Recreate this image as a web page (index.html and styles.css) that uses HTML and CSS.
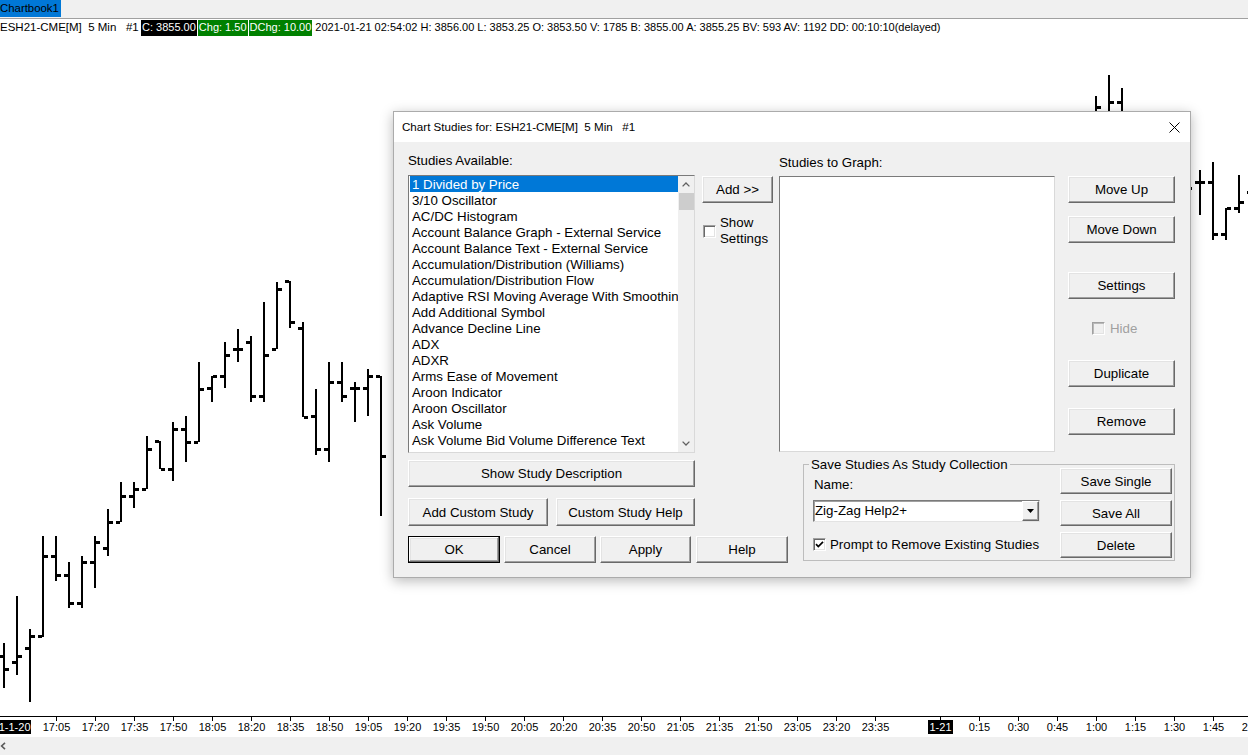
FILE: index.html
```html
<!DOCTYPE html>
<html lang="en">
<head>
<meta charset="utf-8">
<title>Chartbook1</title>
<link rel="stylesheet" href="styles.css">
</head>
<body>
<div class="app">
  <div class="tabbar"><div class="tab">Chartbook1</div></div>
  <div class="info"><span class="sym">ESH21-CME[M]  5 Min   #1</span><span class="box black">C: 3855.00</span><span class="box green">Chg: 1.50</span><span class="box green">DChg: 10.00</span><span class="rest">2021-01-21 02:54:02 H: 3856.00 L: 3853.25 O: 3853.50 V: 1785 B: 3855.00 A: 3855.25 BV: 593 AV: 1192 DD: 00:10:10(delayed)</span></div>

  <div class="chart">
    <svg class="chart-svg" width="1248" height="701" viewBox="0 36 1248 701">
      <g class="bars">
        <rect x="3" y="643" width="2" height="45"/><rect x="-1" y="655" width="4" height="3"/><rect x="5" y="668" width="4" height="3"/>
        <rect x="16" y="596" width="2" height="79"/><rect x="12" y="661" width="4" height="3"/><rect x="18" y="655" width="4" height="3"/>
        <rect x="29" y="629" width="2" height="73"/><rect x="25" y="647" width="4" height="3"/><rect x="31" y="635" width="4" height="3"/>
        <rect x="42" y="536" width="2" height="101"/><rect x="38" y="635" width="4" height="3"/><rect x="44" y="555" width="4" height="3"/>
        <rect x="55" y="536" width="2" height="45"/><rect x="51" y="555" width="4" height="3"/><rect x="57" y="574" width="4" height="3"/>
        <rect x="68" y="562" width="2" height="46"/><rect x="64" y="574" width="4" height="3"/><rect x="70" y="602" width="4" height="3"/>
        <rect x="81" y="556" width="2" height="52"/><rect x="77" y="602" width="4" height="3"/><rect x="83" y="561" width="4" height="3"/>
        <rect x="94" y="536" width="2" height="52"/><rect x="90" y="561" width="4" height="3"/><rect x="96" y="541" width="4" height="3"/>
        <rect x="107" y="509" width="2" height="47"/><rect x="103" y="547" width="4" height="3"/><rect x="109" y="521" width="4" height="3"/>
        <rect x="120" y="482" width="2" height="40"/><rect x="116" y="521" width="4" height="3"/><rect x="122" y="495" width="4" height="3"/>
        <rect x="133" y="482" width="2" height="26"/><rect x="129" y="495" width="4" height="3"/><rect x="135" y="488" width="4" height="3"/>
        <rect x="146" y="436" width="2" height="53"/><rect x="142" y="488" width="4" height="3"/><rect x="148" y="448" width="4" height="3"/>
        <rect x="159" y="441" width="2" height="28"/><rect x="155" y="440" width="4" height="3"/><rect x="161" y="468" width="4" height="3"/>
        <rect x="172" y="422" width="2" height="59"/><rect x="168" y="468" width="4" height="3"/><rect x="174" y="428" width="4" height="3"/>
        <rect x="185" y="416" width="2" height="46"/><rect x="181" y="428" width="4" height="3"/><rect x="187" y="441" width="4" height="3"/>
        <rect x="198" y="362" width="2" height="80"/><rect x="194" y="441" width="4" height="3"/><rect x="200" y="388" width="4" height="3"/>
        <rect x="211" y="376" width="2" height="26"/><rect x="207" y="387" width="4" height="3"/><rect x="213" y="375" width="4" height="3"/>
        <rect x="224" y="342" width="2" height="46"/><rect x="220" y="375" width="4" height="3"/><rect x="226" y="354" width="4" height="3"/>
        <rect x="237" y="329" width="2" height="33"/><rect x="233" y="348" width="4" height="3"/><rect x="239" y="348" width="4" height="3"/>
        <rect x="250" y="336" width="2" height="66"/><rect x="246" y="341" width="4" height="3"/><rect x="252" y="395" width="4" height="3"/>
        <rect x="263" y="302" width="2" height="100"/><rect x="259" y="395" width="4" height="3"/><rect x="265" y="354" width="4" height="3"/>
        <rect x="276" y="282" width="2" height="67"/><rect x="272" y="348" width="4" height="3"/><rect x="278" y="288" width="4" height="3"/>
        <rect x="289" y="281" width="2" height="47"/><rect x="285" y="280" width="4" height="3"/><rect x="291" y="321" width="4" height="3"/>
        <rect x="302" y="322" width="2" height="95"/><rect x="298" y="327" width="4" height="3"/><rect x="304" y="416" width="4" height="3"/>
        <rect x="315" y="389" width="2" height="66"/><rect x="311" y="415" width="4" height="3"/><rect x="317" y="448" width="4" height="3"/>
        <rect x="328" y="362" width="2" height="100"/><rect x="324" y="448" width="4" height="3"/><rect x="330" y="381" width="4" height="3"/>
        <rect x="341" y="362" width="2" height="40"/><rect x="337" y="381" width="4" height="3"/><rect x="343" y="395" width="4" height="3"/>
        <rect x="354" y="382" width="2" height="40"/><rect x="350" y="387" width="4" height="3"/><rect x="356" y="387" width="4" height="3"/>
        <rect x="367" y="369" width="2" height="47"/><rect x="363" y="387" width="4" height="3"/><rect x="369" y="375" width="4" height="3"/>
        <rect x="380" y="376" width="2" height="140"/><rect x="376" y="375" width="4" height="3"/><rect x="382" y="455" width="4" height="3"/>

        <rect x="1095" y="96" width="2" height="24"/><rect x="1097" y="106" width="4" height="3"/>
        <rect x="1108" y="75" width="2" height="45"/><rect x="1110" y="101" width="4" height="3"/>
        <rect x="1121" y="88" width="2" height="32"/><rect x="1117" y="101" width="4" height="3"/>

        <rect x="1186" y="170" width="2" height="30"/><rect x="1188" y="187" width="4" height="3"/>
        <rect x="1199" y="170" width="2" height="45"/><rect x="1195" y="181" width="4" height="3"/><rect x="1201" y="181" width="4" height="3"/>
        <rect x="1212" y="162" width="2" height="78"/><rect x="1208" y="181" width="4" height="3"/><rect x="1214" y="233" width="4" height="3"/>
        <rect x="1225" y="208" width="2" height="32"/><rect x="1221" y="233" width="4" height="3"/><rect x="1227" y="207" width="4" height="3"/>
        <rect x="1238" y="175" width="2" height="38"/><rect x="1234" y="207" width="4" height="3"/><rect x="1240" y="201" width="4" height="3"/>
        <rect x="1251" y="180" width="2" height="30"/><rect x="1247" y="191" width="4" height="3"/>
      </g>

      <g class="axis">
        <rect x="0" y="716" width="1248" height="1"/>
        <rect x="56" y="717" width="1" height="4"/><rect x="95" y="717" width="1" height="4"/><rect x="134" y="717" width="1" height="4"/>
        <rect x="173" y="717" width="1" height="4"/><rect x="212" y="717" width="1" height="4"/><rect x="251" y="717" width="1" height="4"/>
        <rect x="290" y="717" width="1" height="4"/><rect x="329" y="717" width="1" height="4"/><rect x="368" y="717" width="1" height="4"/>
        <rect x="407" y="717" width="1" height="4"/><rect x="446" y="717" width="1" height="4"/><rect x="485" y="717" width="1" height="4"/>
        <rect x="524" y="717" width="1" height="4"/><rect x="563" y="717" width="1" height="4"/><rect x="602" y="717" width="1" height="4"/>
        <rect x="641" y="717" width="1" height="4"/><rect x="680" y="717" width="1" height="4"/><rect x="719" y="717" width="1" height="4"/>
        <rect x="758" y="717" width="1" height="4"/><rect x="797" y="717" width="1" height="4"/><rect x="836" y="717" width="1" height="4"/>
        <rect x="875" y="717" width="1" height="4"/><rect x="940" y="717" width="1" height="4"/><rect x="979" y="717" width="1" height="4"/>
        <rect x="1018" y="717" width="1" height="4"/><rect x="1057" y="717" width="1" height="4"/><rect x="1096" y="717" width="1" height="4"/>
        <rect x="1135" y="717" width="1" height="4"/><rect x="1174" y="717" width="1" height="4"/><rect x="1213" y="717" width="1" height="4"/>
        <rect x="0" y="720" width="31" height="14"/>
        <rect x="928" y="720" width="25" height="14"/>
      </g>
      <g class="axis-labels">
        <text class="date first" x="30.5" y="731">21-1-20</text>
        <text x="56.5" y="731">17:05</text>
        <text x="95.5" y="731">17:20</text>
        <text x="134.5" y="731">17:35</text>
        <text x="173.5" y="731">17:50</text>
        <text x="212.5" y="731">18:05</text>
        <text x="251.5" y="731">18:20</text>
        <text x="290.5" y="731">18:35</text>
        <text x="329.5" y="731">18:50</text>
        <text x="368.5" y="731">19:05</text>
        <text x="407.5" y="731">19:20</text>
        <text x="446.5" y="731">19:35</text>
        <text x="485.5" y="731">19:50</text>
        <text x="524.5" y="731">20:05</text>
        <text x="563.5" y="731">20:20</text>
        <text x="602.5" y="731">20:35</text>
        <text x="641.5" y="731">20:50</text>
        <text x="680.5" y="731">21:05</text>
        <text x="719.5" y="731">21:35</text>
        <text x="758.5" y="731">21:50</text>
        <text x="797.5" y="731">23:05</text>
        <text x="836.5" y="731">23:20</text>
        <text x="875.5" y="731">23:35</text>
        <text class="date" x="940.5" y="731">1-21</text>
        <text x="979.5" y="731">0:15</text>
        <text x="1018.5" y="731">0:30</text>
        <text x="1057.5" y="731">0:45</text>
        <text x="1096.5" y="731">1:00</text>
        <text x="1135.5" y="731">1:15</text>
        <text x="1174.5" y="731">1:30</text>
        <text x="1213.5" y="731">1:45</text>
        <text x="1252.5" y="731">2:00</text>
      </g>
    </svg>
  </div>

  <div class="hscroll">
    <svg class="scroll-left" width="8" height="8" viewBox="0 0 8 8"><path d="M5 0.8L1.6 4L5 7.2"/></svg>
  </div>

  <div class="dialog">
    <div class="titlebar">
      <span class="title">Chart Studies for: ESH21-CME[M]  5 Min   #1</span>
      <svg class="close" width="11" height="11" viewBox="0 0 11 11"><path d="M0.5 0.5L10.5 10.5M10.5 0.5L0.5 10.5"/></svg>
    </div>
    <div class="dlg-body">
      <div class="top">
        <div class="col-avail">
          <div class="label">Studies Available:</div>
          <div class="listbox avail">
            <ul class="items">
              <li class="sel">1 Divided by Price</li>
              <li>3/10 Oscillator</li>
              <li>AC/DC Histogram</li>
              <li>Account Balance Graph - External Service</li>
              <li>Account Balance Text - External Service</li>
              <li>Accumulation/Distribution (Williams)</li>
              <li>Accumulation/Distribution Flow</li>
              <li>Adaptive RSI Moving Average With Smoothing</li>
              <li>Add Additional Symbol</li>
              <li>Advance Decline Line</li>
              <li>ADX</li>
              <li>ADXR</li>
              <li>Arms Ease of Movement</li>
              <li>Aroon Indicator</li>
              <li>Aroon Oscillator</li>
              <li>Ask Volume</li>
              <li>Ask Volume Bid Volume Difference Text</li>
              <li>Ask/Bid Volume Difference Bars</li>
            </ul>
            <div class="vscroll">
              <span class="sb-arrow"><svg width="8" height="5" viewBox="0 0 8 5"><path d="M0.6 4.4L4 1L7.4 4.4"/></svg></span>
              <span class="sb-thumb"></span>
              <span class="sb-track"></span>
              <span class="sb-arrow"><svg width="8" height="5" viewBox="0 0 8 5"><path d="M0.6 0.6L4 4L7.4 0.6"/></svg></span>
            </div>
          </div>
        </div>

        <div class="col-add">
          <button class="btn add">Add &gt;&gt;</button>
          <div class="check show-settings"><span class="cb"></span><span class="check-label">Show<br>Settings</span></div>
        </div>

        <div class="col-graph">
          <div class="label">Studies to Graph:</div>
          <div class="listbox graph"></div>
        </div>

        <div class="col-actions">
          <button class="btn act move-up">Move Up</button>
          <button class="btn act move-down">Move Down</button>
          <button class="btn act settings">Settings</button>
          <div class="check hide"><span class="cb disabled"></span><span class="check-label">Hide</span></div>
          <button class="btn act duplicate">Duplicate</button>
          <button class="btn act remove">Remove</button>
        </div>
      </div>

      <div class="bottom">
        <div class="left-actions">
          <button class="btn describe">Show Study Description</button>
          <div class="row custom-row">
            <button class="btn custom-add">Add Custom Study</button>
            <button class="btn custom-help">Custom Study Help</button>
          </div>
          <div class="row main-row">
            <button class="btn ok">OK</button>
            <button class="btn cancel">Cancel</button>
            <button class="btn apply">Apply</button>
            <button class="btn help">Help</button>
          </div>
        </div>

        <fieldset class="collection">
          <legend>Save Studies As Study Collection</legend>
          <div class="coll-inner">
            <div class="coll-left">
              <div class="name-label">Name:</div>
              <div class="combo">
                <span class="combo-text">Zig-Zag Help2+</span>
                <span class="combo-btn"><svg width="7" height="4" viewBox="0 0 7 4"><path d="M0 0H7L3.5 4Z"/></svg></span>
              </div>
              <div class="check prompt"><span class="cb checked"><svg width="11" height="11" viewBox="0 0 11 11"><path d="M2 5.2L4.3 7.6L9 2.8"/></svg></span><span class="check-label">Prompt to Remove Existing Studies</span></div>
            </div>
            <div class="coll-right">
              <button class="btn save">Save Single</button>
              <button class="btn save">Save All</button>
              <button class="btn save">Delete</button>
            </div>
          </div>
        </fieldset>
      </div>
    </div>
  </div>
</div>
</body>
</html>
```

FILE: styles.css
```css
* { box-sizing: border-box; }

html, body {
  margin: 0;
  padding: 0;
}

body {
  width: 1248px;
  height: 755px;
  overflow: hidden;
  background: #fff;
  color: #000;
  font-family: "Liberation Sans", Arial, sans-serif;
}

.app {
  position: relative;
  width: 1248px;
  height: 755px;
}

/* ---------- tab bar ---------- */
.tabbar {
  height: 19px;
  background: #f0f0f0;
  border-bottom: 1px solid #a0a0a0;
}

.tab {
  width: 61px;
  height: 17px;
  background: #0078d7;
  color: #000;
  font-size: 11.4px;
  line-height: 17px;
  white-space: nowrap;
  overflow: hidden;
}

/* ---------- info line ---------- */
.info {
  display: flex;
  height: 17px;
  padding-top: 1px;
  font-size: 11px;
  line-height: 15px;
  white-space: pre;
}

.sym {
  width: 141px;
  font-size: 11.5px;
}

.box {
  color: #fff;
  padding: 0 1px;
  margin-right: 1px;
}

.black { background: #000; }
.green { background: #008000; }

.rest { margin-left: 2px; }

/* ---------- chart ---------- */
.chart { height: 701px; }

.chart-svg { display: block; }

.bars rect,
.axis rect { fill: #000; }

.axis-labels text {
  font-family: "Liberation Sans", Arial, sans-serif;
  font-size: 11px;
  fill: #000;
  text-anchor: middle;
}

.axis-labels text.date { fill: #fff; }
.axis-labels text.first { text-anchor: end; }

.hscroll {
  height: 18px;
  background: #f0f0f0;
  display: flex;
  align-items: center;
}

.scroll-left path {
  fill: none;
  stroke: #5a5a5a;
  stroke-width: 1.6;
}

/* ---------- dialog ---------- */
.dialog {
  position: absolute;
  left: 393px;
  top: 111px;
  width: 798px;
  height: 467px;
  background: #f0f0f0;
  border: 1px solid #ababab;
  box-shadow: 0 3px 12px rgba(0, 0, 0, 0.28);
  font-size: 13.3px;
}

.titlebar {
  height: 30px;
  background: #fff;
  display: flex;
  align-items: center;
  justify-content: space-between;
  padding: 0 10px 0 8px;
}

.title {
  font-size: 11.6px;
  white-space: pre;
  margin-bottom: 2px;
}

.close path {
  stroke: #000;
  stroke-width: 1;
  fill: none;
}

.dlg-body {
  padding: 10px 0 0 14px;
}

.top {
  display: flex;
  align-items: flex-start;
}

.label {
  height: 16px;
  line-height: 17px;
  white-space: nowrap;
}

.listbox {
  background: #fff;
  border: 1px solid;
  border-color: #7a7a7a #d9d9d9 #d9d9d9 #7a7a7a;
}

.col-avail { width: 287px; }

.listbox.avail {
  margin-top: 7px;
  height: 278px;
  display: flex;
  padding-left: 1px;
  overflow: hidden;
}

.items {
  list-style: none;
  margin: 0;
  padding: 0;
  flex: 1;
  min-width: 0;
  overflow: hidden;
}

.items li {
  height: 16px;
  line-height: 17px;
  padding-left: 2px;
  white-space: nowrap;
  overflow: hidden;
}

.items li.sel {
  background: #0078d7;
  color: #fff;
}

.vscroll {
  width: 16px;
  background: #f0f0f0;
  display: flex;
  flex-direction: column;
  align-items: center;
}

.sb-arrow {
  height: 17px;
  display: flex;
  align-items: center;
  justify-content: center;
}

.sb-arrow path {
  fill: none;
  stroke: #606060;
  stroke-width: 1.3;
}

.sb-thumb {
  width: 15px;
  height: 17px;
  background: #cdcdcd;
}

.sb-track { flex: 1; }

.col-add {
  width: 71px;
  margin-left: 7px;
  padding-top: 24px;
}

.btn {
  display: block;
  margin: 0;
  padding: 0;
  font-family: inherit;
  font-size: 13.3px;
  color: #000;
  background: #f0f0f0;
  border: 1px solid;
  border-color: #fff #696969 #696969 #fff;
  box-shadow: inset -1px -1px 0 #a0a0a0, inset 1px 1px 0 #e3e3e3;
  white-space: nowrap;
}

.btn.add {
  width: 71px;
  height: 27px;
}

.check {
  display: flex;
  align-items: center;
}

.cb {
  width: 13px;
  height: 13px;
  flex: none;
  background: #fff;
  border: 1px solid;
  border-color: #a0a0a0 #fff #fff #a0a0a0;
  box-shadow: inset 1px 1px 0 #696969, inset -1px -1px 0 #e3e3e3;
  display: flex;
  align-items: center;
  justify-content: center;
}

.cb.disabled {
  background: #f0f0f0;
  box-shadow: inset 1px 1px 0 #b9b9b9, inset -1px -1px 0 #e3e3e3;
}

.cb.checked svg { display: block; }

.cb.checked path {
  fill: none;
  stroke: #000;
  stroke-width: 1.7;
}

.check-label {
  line-height: 16px;
  white-space: nowrap;
}

.show-settings {
  margin-top: 12px;
  padding-left: 1px;
}

.show-settings .check-label { margin-left: 4px; }

.col-graph {
  width: 276px;
  margin-left: 6px;
  padding-top: 2px;
}

.listbox.graph {
  margin-top: 6px;
  height: 276px;
}

.col-actions {
  width: 107px;
  margin-left: 13px;
  padding-top: 24px;
}

.btn.act {
  width: 107px;
  height: 27px;
}

.move-down { margin-top: 13px; }
.settings { margin-top: 29px; }

.check.hide {
  margin-top: 21px;
  height: 17px;
  padding-left: 24px;
}

.hide .check-label {
  margin-left: 5px;
  color: #a0a0a0;
}

.duplicate { margin-top: 23px; }
.remove { margin-top: 21px; }

/* ---------- bottom area ---------- */
.bottom {
  display: flex;
  align-items: flex-start;
}

.left-actions { width: 380px; }

.btn.describe {
  margin-top: 7px;
  width: 287px;
  height: 27px;
}

.row {
  display: flex;
  gap: 8px;
}

.custom-row { margin-top: 11px; }

.custom-row .btn { height: 28px; }
.custom-add { width: 140px; }
.custom-help { width: 139px; }

.main-row {
  margin-top: 10px;
  gap: 4px;
}

.main-row .btn {
  width: 92px;
  height: 27px;
}

.main-row .apply { width: 91px; }
.main-row .help { margin-left: 1px; }

.btn.ok {
  border: 1px solid #000;
  box-shadow: inset -1px -1px 0 #696969, inset 1px 1px 0 #fff, inset -2px -2px 0 #a0a0a0, inset 2px 2px 0 #e3e3e3;
}

.collection {
  margin: 3px 0 0 15px;
  width: 372px;
  padding: 0 2px 2px 9px;
  border: 1px solid #bdbdbd;
  min-width: 0;
}

.collection legend {
  padding: 0 2px;
  margin-left: -4px;
  line-height: 17px;
  font-size: 13.3px;
}

.coll-inner {
  display: flex;
  gap: 20px;
}

.coll-left { width: 227px; }

.name-label {
  margin-top: 3px;
  padding-left: 1px;
  line-height: 17px;
}

.combo {
  margin-top: 7px;
  height: 22px;
  display: flex;
  background: #fff;
  border: 1px solid;
  border-color: #7a7a7a #e3e3e3 #e3e3e3 #7a7a7a;
  box-shadow: inset 1px 1px 0 #a0a0a0;
}

.combo-text {
  flex: 1;
  line-height: 20px;
  padding-left: 1px;
  white-space: nowrap;
}

.combo-btn {
  width: 17px;
  height: 20px;
  background: #f0f0f0;
  border: 1px solid;
  border-color: #fff #696969 #696969 #fff;
  box-shadow: inset -1px -1px 0 #a0a0a0;
  display: flex;
  align-items: center;
  justify-content: center;
}

.combo-btn path { fill: #000; }

.check.prompt { margin-top: 14px; }

.prompt .check-label {
  margin-left: 4px;
  line-height: 17px;
}

.coll-right {
  width: 112px;
  margin-top: -5px;
  display: flex;
  flex-direction: column;
  gap: 6px;
}

.btn.save {
  width: 112px;
  height: 26px;
}
```
